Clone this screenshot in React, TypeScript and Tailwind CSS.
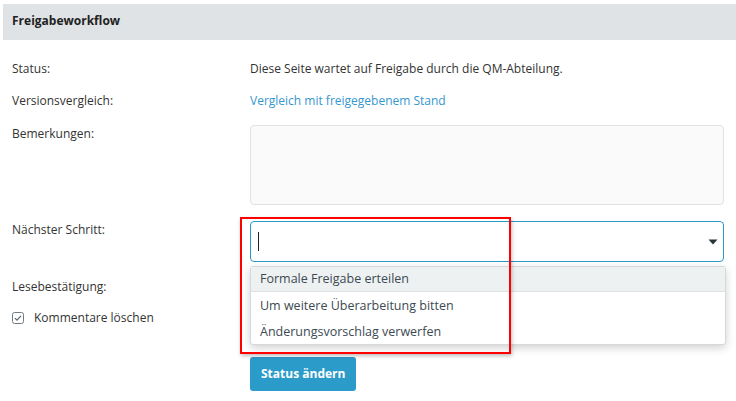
import React from 'react';

const OPTIONS = ['Formale Freigabe erteilen', 'Um weitere Überarbeitung bitten', 'Änderungsvorschlag verwerfen'];

const CheckIcon: React.FC = () => (
  <svg width="12" height="12" viewBox="0 0 12 12" className="shrink-0">
    <rect x="0.5" y="0.5" width="11" height="11" rx="2" fill="white" stroke="#707a82" />
    <path d="M3 6.2 L5 8.2 L9 3.8" fill="none" stroke="#5a656d" strokeWidth="1.2" />
  </svg>
);

const App: React.FC = () => {
  return (
    <div className="w-[736px] h-[401px] bg-white pt-[4px] text-[12px] text-[#333] overflow-hidden" style={{ fontFamily: '"Open Sans", "Noto Sans", sans-serif' }}>
      {/* Panel header */}
      <div className="ml-[3px] h-[36px] bg-[#dfe3e6] px-[9px] pt-[7px] leading-[20px] font-bold text-[#222]">
        Freigabeworkflow
      </div>

      <div className="px-[12px]">
        <div className="flex mt-[19px] leading-[20px]">
          <div className="w-[238px] shrink-0">Status:</div>
          <div>Diese Seite wartet auf Freigabe durch die QM-Abteilung.</div>
        </div>

        <div className="flex mt-[12px] leading-[20px]">
          <div className="w-[238px] shrink-0">Versionsvergleich:</div>
          <a className="text-[#3597cf] cursor-pointer">Vergleich mit freigegebenem Stand</a>
        </div>

        <div className="flex mt-[13px] leading-[20px]">
          <div className="w-[238px] shrink-0">Bemerkungen:</div>
          <div className="flex-1 mt-[1px] h-[80px] rounded-[4px] border border-[#e2e2e2] bg-[#fafafa]" />
        </div>

        <div className="flex mt-[15px] leading-[20px]">
          <div className="w-[238px] shrink-0">Nächster Schritt:</div>
          <div className="flex-1 relative mt-[1px]">
            <div className="h-[41px] rounded-[4px] border border-[#2b9ac8] bg-white flex items-center pl-[7px] pr-[4px]">
              <span className="w-px h-[19px] bg-[#222]" />
              <span className="flex-1" />
              <svg width="10" height="6" viewBox="0 0 10 6" className="mr-[1px]">
                <path d="M0.5 0.5 H9.5 L5 5.5 Z" fill="#2a3338" />
              </svg>
            </div>

            {/* Open dropdown list */}
            <div className="absolute left-0 right-[-2px] top-[45px] z-10 rounded-[3px] border border-[#d6d9db] bg-white shadow-[0_3px_8px_rgba(0,0,0,0.18)] text-[#3c4a52] text-[12.5px]">
              {OPTIONS.map((opt, i) => (
                <div
                  key={opt}
                  className={
                    i === 0
                      ? 'h-[25px] pl-[9px] flex items-center bg-[#eef1f2] border-b border-[#dde1e3]'
                      : 'h-[26px] pl-[9px] pt-[2px] flex items-center'
                  }
                >
                  {opt}
                </div>
              ))}
            </div>

            {/* Highlight frame */}
            <div className="absolute left-[-10px] top-[-4px] w-[271px] h-[137px] z-20 border-2 border-[#ff0000] shadow-[1px_2px_4px_rgba(0,0,0,0.25)] pointer-events-none" />
          </div>
        </div>

        <div className="flex mt-[15px] leading-[20px]">
          <div className="w-[238px] shrink-0">Lesebestätigung:</div>
        </div>

        <div className="flex items-center gap-[10px] mt-[11px] leading-[20px]">
          <CheckIcon />
          <span>Kommentare löschen</span>
        </div>

        <div className="pl-[238px] mt-[29px]">
          <button className="h-[34px] px-[11px] rounded-[3px] bg-[#2b9bc9] text-white font-bold leading-[20px]">
            Status ändern
          </button>
        </div>
      </div>
    </div>
  );
};

export default App;
